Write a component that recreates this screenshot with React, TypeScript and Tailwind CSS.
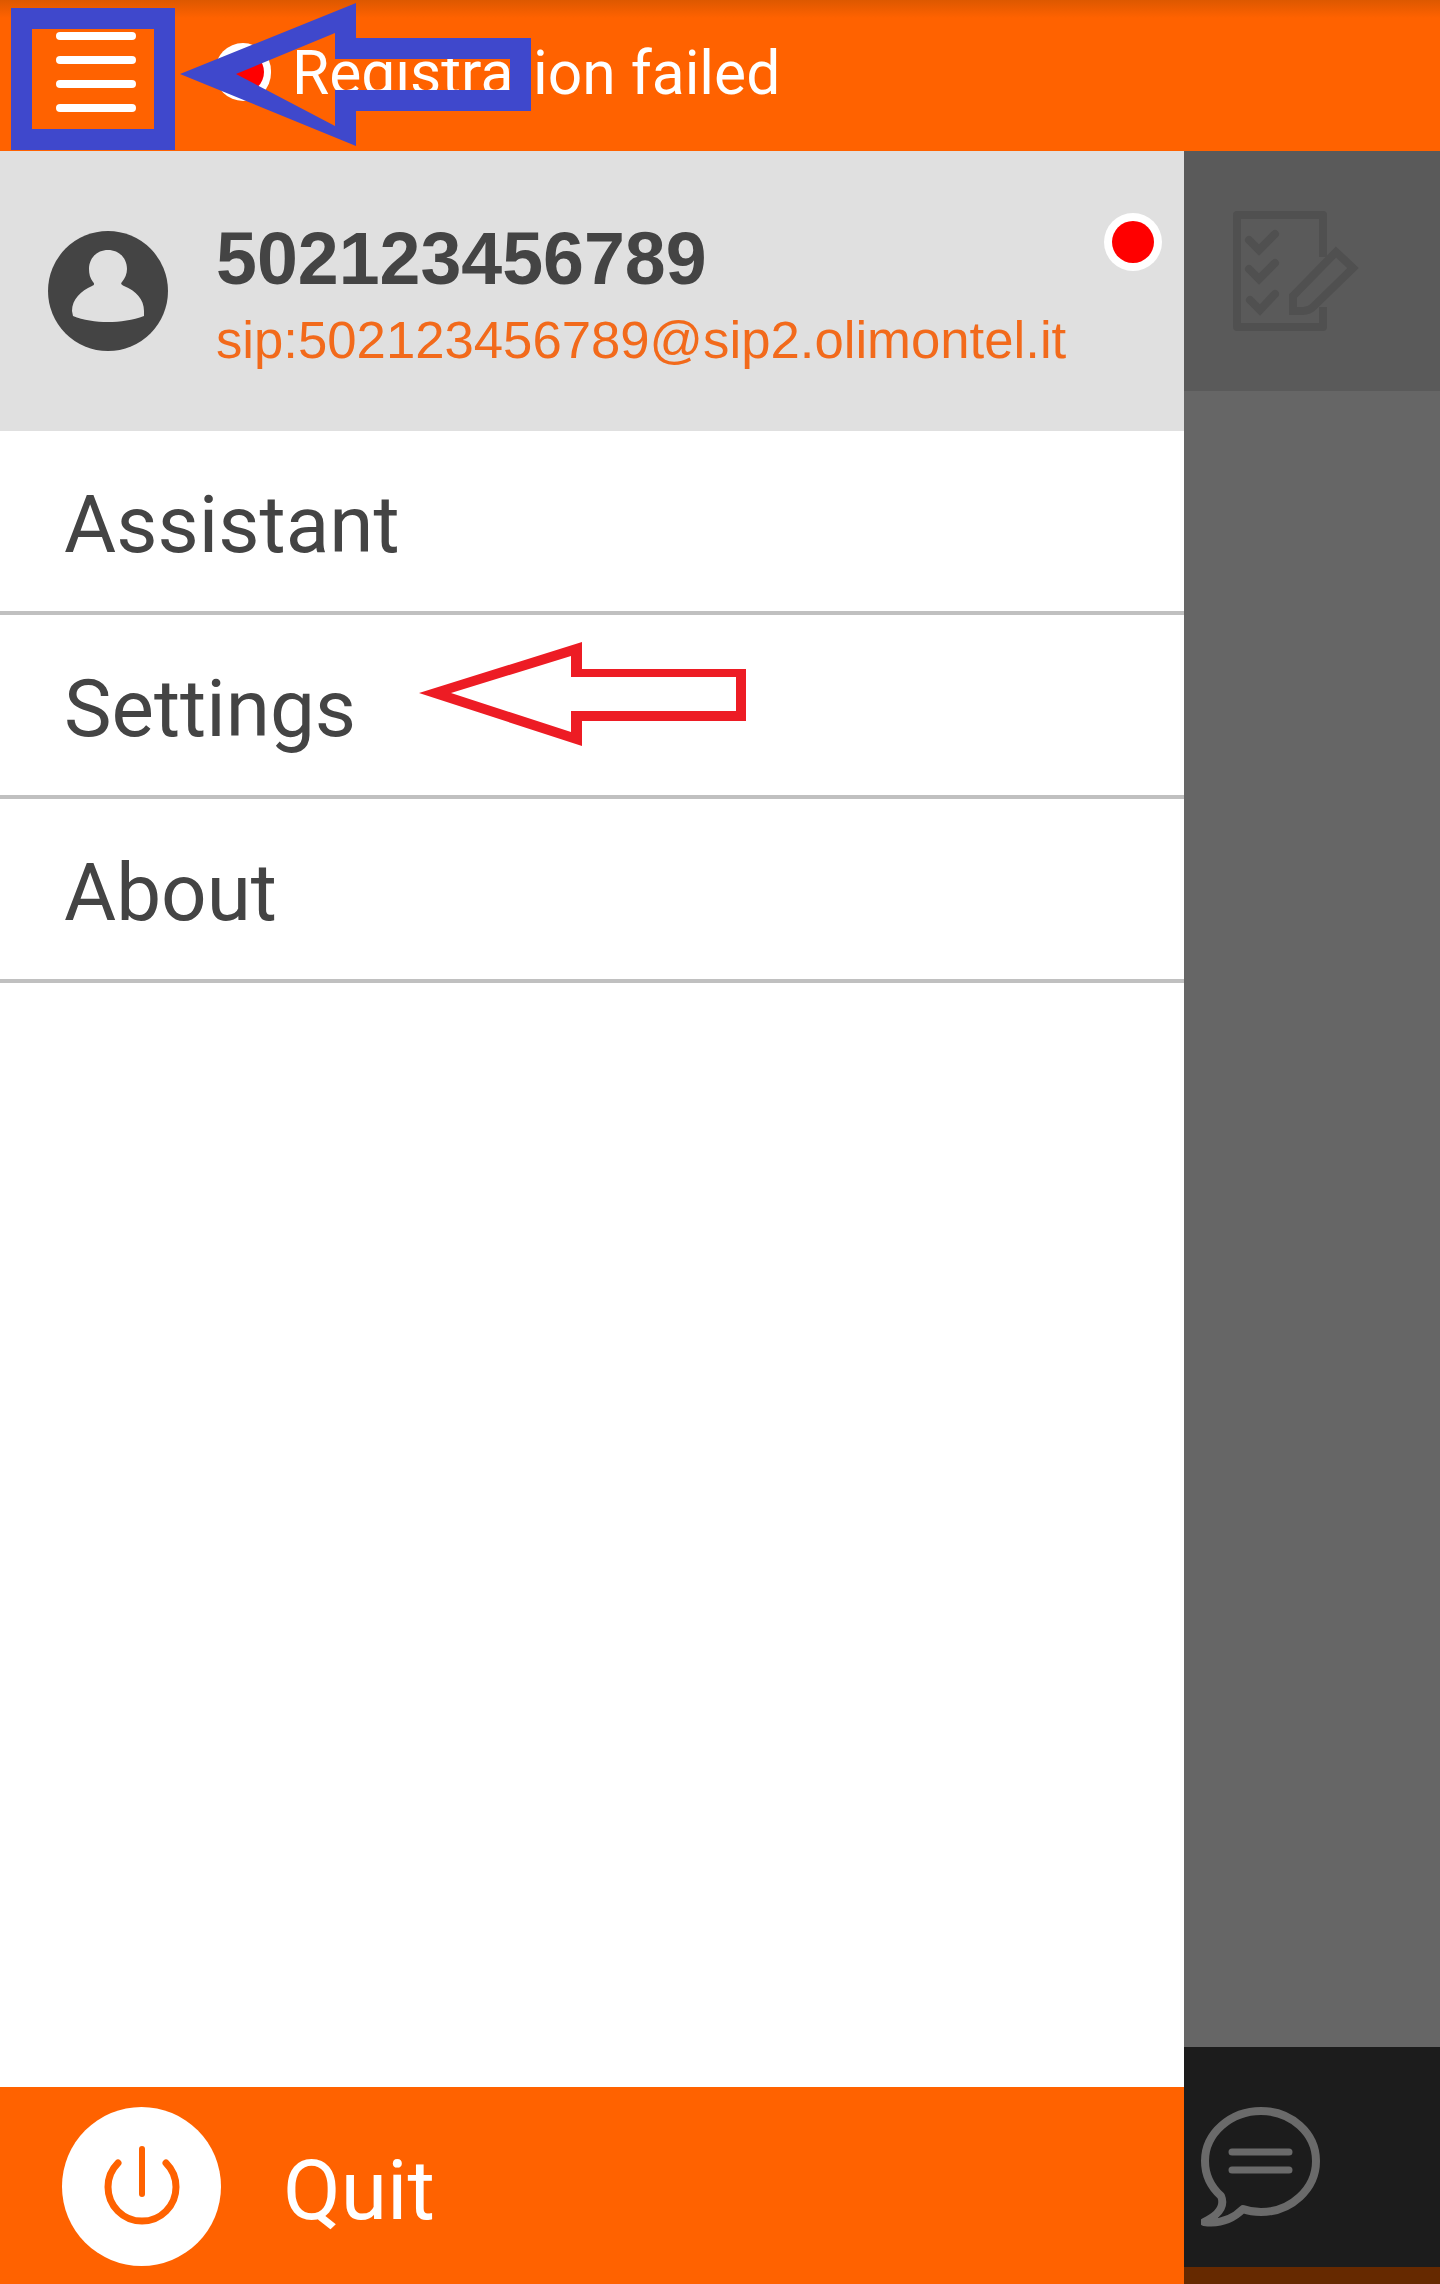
import React from "react";

const Row = ({ label }: { label: string }) => (
  <div className="flex h-[184px] items-center border-b-4 border-[#c0c0c0] pl-[64px] pt-[8px] text-[#444444]">
    <span className="font-['Roboto',sans-serif] text-[80px] leading-none">{label}</span>
  </div>
);

const StatusDot = ({ size, inner }: { size: string; inner: string }) => (
  <div className={`flex items-center justify-center rounded-full bg-white ${size}`}>
    <div className={`rounded-full bg-[#ff0000] ${inner}`} />
  </div>
);

export default function App() {
  return (
    <div className="relative flex h-[2284px] w-[1440px] flex-col overflow-hidden bg-white">
      <header className="flex h-[151px] shrink-0 items-center bg-[linear-gradient(to_bottom,#dd5800_0px,#ff6200_18px)] pb-[8px] pl-[56px]">
        <div className="flex w-[80px] flex-col gap-[16px]">
          <div className="h-[8px] rounded-full bg-white" />
          <div className="h-[8px] rounded-full bg-white" />
          <div className="h-[8px] rounded-full bg-white" />
          <div className="h-[8px] rounded-full bg-white" />
        </div>
        <div className="ml-[79px]">
          <StatusDot size="h-[58px] w-[56px]" inner="h-[42px] w-[42px]" />
        </div>
        <span className="ml-[21px] pt-[6px] font-['Roboto',sans-serif] text-[60.5px] leading-none text-white">Registration failed</span>
      </header>

      <div className="flex min-h-0 flex-1">
        <aside className="flex w-[1184px] shrink-0 flex-col">
          <section className="relative flex h-[280px] shrink-0 items-center bg-[#e0e0e0] pl-[48px]">
            <svg width="120" height="120" viewBox="0 0 120 120" className="shrink-0">
              <circle cx="60" cy="60" r="60" fill="#444444" />
              <path
                d="M45 51C42 47 41 43 41 38C41 27 49 19 60 19C71 19 79 27 79 38C79 43 77 47 74 51C72 53 74 54 76 55C88 60 96 68 96 80L96 85C85 89 72 91 60 91C48 91 35 89 25 85L24 80C24 68 33 60 44 55C46 54 47 53 45 51Z"
                fill="#e0e0e0"
              />
            </svg>
            <div className="ml-[48px] flex flex-col pt-[6px] font-['Liberation_Sans',sans-serif]">
              <span className="text-[73.5px] font-bold leading-[84px] text-[#444444]">502123456789</span>
              <span className="mt-[7px] text-[52.7px] leading-[64px] text-[#f26a1b]">sip:502123456789@sip2.olimontel.it</span>
            </div>
            <div className="absolute right-[22px] top-[62px]">
              <StatusDot size="h-[58px] w-[58px]" inner="h-[42px] w-[42px]" />
            </div>
          </section>

          <nav className="flex min-h-0 flex-1 flex-col bg-white">
            <Row label="Assistant" />
            <Row label="Settings" />
            <Row label="About" />
          </nav>

          <footer className="flex h-[197px] shrink-0 items-center bg-[#ff6200] pl-[62px] pt-[2px]">
            <div className="flex h-[159px] w-[159px] items-center justify-center rounded-full bg-white">
              <svg width="80" height="84" viewBox="0 0 80 84" fill="none" stroke="#ff6200" strokeLinecap="round">
                <path d="M40 4V49" strokeWidth="6" />
                <path d="M16 18A34 34 0 1 0 64 18" strokeWidth="7" />
              </svg>
            </div>
            <span className="ml-[62px] pt-[8px] font-['Roboto',sans-serif] text-[84px] leading-none text-white">Quit</span>
          </footer>
        </aside>

        <div className="flex min-w-0 flex-1 flex-col bg-[#666666]">
          <div className="flex h-[240px] shrink-0 items-start bg-[#5a5a5a] pl-[49px] pt-[60px]">
            <svg width="126" height="120" viewBox="0 0 126 120" fill="none" stroke="#505050" strokeWidth="8">
              <path d="M90 46V4H4V116H90V96" strokeLinejoin="round" />
              <path d="M16 29L26 39L42 23M16 58L26 68L42 52M17 89L27 99L42 83" strokeLinecap="round" />
              <path d="M60 85L103 41L120 57L80 96Q76 100 70 100H60Z" />
            </svg>
          </div>
          <div className="min-h-0 flex-1" />
          <div className="flex h-[220px] shrink-0 items-start bg-[#1c1c1c] pl-[17px] pt-[60px]">
            <svg width="120" height="120" viewBox="0 0 120 120" fill="none" stroke="#6a6a6a" strokeWidth="8" strokeLinejoin="round">
              <path d="M42 102Q50 105 60 105C90 105 115 82 115 54C115 26 90 4 60 4C30 4 4 26 4 54C4 68 10 80 20 89C23 96 22 106 3 115C18 117 32 112 42 102Z" />
              <path d="M31 45H88M31 63H88" strokeWidth="7" strokeLinecap="round" />
            </svg>
          </div>
          <div className="h-[17px] shrink-0 bg-[#662900]" />
        </div>
      </div>

      <svg className="absolute left-0 top-0 h-[760px] w-[760px]" viewBox="0 0 760 760">
        <path
          fillRule="evenodd"
          fill="#3f48cc"
          d="M11 8H175V150H11ZM32 29V129H154V29ZM180 74L356 3V38H531V111H356V146ZM236 74L335 126V90H510V59H335V33Z"
        />
        <path
          fillRule="evenodd"
          fill="#ed1c24"
          d="M419 693L582 642V669H746V721H582V746ZM451 693L571 732V711H736V677H571V656Z"
        />
      </svg>
    </div>
  );
}
